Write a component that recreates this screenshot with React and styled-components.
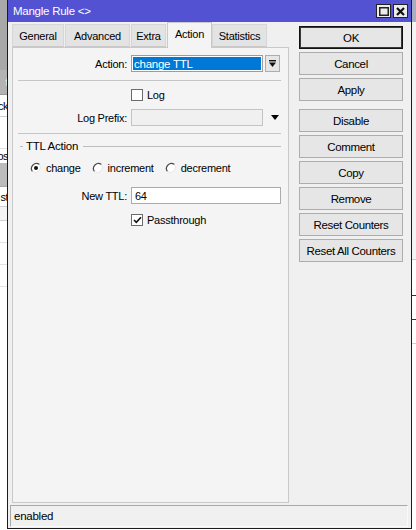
import React from 'react';
import styled, { createGlobalStyle } from 'styled-components';

const Global = createGlobalStyle`
  html, body { margin: 0; padding: 0; }
  body {
    width: 416px;
    height: 530px;
    overflow: hidden;
    background: #fff;
    font-family: "Liberation Sans", Arial, sans-serif;
    font-size: 11px;
    letter-spacing: -0.25px;
    color: #000;
  }
  * { box-sizing: border-box; }
`;

/* ---------- desktop behind the dialog ---------- */

const Desktop = styled.div`
  position: relative;
  width: 416px;
  height: 530px;
  overflow: hidden;
  display: flex;
  justify-content: space-between;
  background: #fff;
`;

const Pane = styled.div`
  width: ${(p) => p.$w}px;
  display: flex;
  flex-direction: column;
`;

const PaneRow = styled.div`
  flex: none;
  height: ${(p) => p.$h}px;
  background: ${(p) => p.$bg || '#fff'};
  border-bottom: ${(p) => (p.$line ? `1px solid ${p.$line}` : 'none')};
  color: ${(p) => p.$color || '#000'};
  display: flex;
  justify-content: flex-end;
  align-items: center;
  white-space: nowrap;
  font-size: 11px;
  letter-spacing: -0.5px;
`;

/* ---------- dialog window ---------- */

const Window = styled.div`
  position: absolute;
  left: 7px;
  top: 0;
  width: 405px;
  height: 529px;
  border: 1px solid #1c1c1c;
  border-top: none;
  background: #f0f0f0;
  display: flex;
  flex-direction: column;
`;

const TitleBar = styled.div`
  flex: none;
  height: 22px;
  background: #5252d2;
  display: flex;
  align-items: center;
  padding: 0 3px 0 5px;
  color: #fff;
  font-size: 11.5px;
`;

const Title = styled.div`
  flex: 1;
`;

const TitleButton = styled.div`
  width: 15px;
  height: 14px;
  margin-left: 2px;
  background: #ececec;
  border: 1px solid #222;
  display: flex;
  align-items: center;
  justify-content: center;
`;

const Body = styled.div`
  flex: 1;
  min-height: 0;
  display: flex;
  padding: 2px 0 0 4px;
`;

const Main = styled.div`
  width: 277px;
  display: flex;
  flex-direction: column;
`;

const TabRow = styled.div`
  flex: none;
  height: 23px;
  display: flex;
  align-items: flex-end;
  position: relative;
  z-index: 1;
`;

const Tab = styled.div`
  width: ${(p) => p.$w}px;
  height: ${(p) => (p.$active ? 26 : 23)}px;
  margin-right: ${(p) => p.$gap ?? 1}px;
  margin-bottom: ${(p) => (p.$active ? -1 : 0)}px;
  background: ${(p) => (p.$active ? '#f4f4f4' : '#e3e3e3')};
  border: 1px solid ${(p) => (p.$active ? '#c9c9c9' : '#d6d6d6')};
  border-bottom: ${(p) => (p.$active ? 'none' : '1px solid #c9c9c9')};
  display: flex;
  align-items: center;
  justify-content: center;
  padding-bottom: ${(p) => (p.$active ? 3 : 0)}px;
`;

const Panel = styled.div`
  flex: 1;
  background: #f4f4f4;
  border: 1px solid #c9c9c9;
  padding: 7px 7px 0 0;
  display: flex;
  flex-direction: column;
`;

const FormRow = styled.div`
  flex: none;
  display: grid;
  grid-template-columns: 114px 1fr;
  column-gap: 4px;
  align-items: center;
  height: ${(p) => p.$h || 17}px;
  margin-top: ${(p) => p.$mt || 0}px;
`;

const Label = styled.div`
  text-align: right;
  white-space: nowrap;
`;

const FieldLine = styled.div`
  display: flex;
  align-items: center;
  height: 100%;
`;

const SelectBox = styled.div`
  width: 132px;
  height: 17px;
  border: 1px solid #9c9c9c;
  background: #fff;
  padding: 1px;
  display: flex;
`;

const SelectText = styled.div`
  flex: 1;
  background: #0078d7;
  color: #fff;
  padding-left: 1px;
  display: flex;
  align-items: center;
  font-size: 11.5px;
`;

const MoreButton = styled.div`
  width: 15px;
  height: 17px;
  margin-left: 2px;
  background: #e6e6e6;
  border: 1px solid #adadad;
  display: flex;
  align-items: center;
  justify-content: center;
`;

const Input = styled.div`
  width: ${(p) => p.$w}px;
  height: 17px;
  border: 1px solid ${(p) => (p.$disabled ? '#c4c4c4' : '#acacac')};
  background: ${(p) => (p.$disabled ? '#f0f0f0' : '#fff')};
  padding-left: 3px;
  display: flex;
  align-items: center;
`;

const DropArrow = styled.div`
  margin-left: 8px;
  width: 0;
  height: 0;
  border-left: 4.5px solid transparent;
  border-right: 4.5px solid transparent;
  border-top: 5px solid #000;
`;

const Separator = styled.div`
  flex: none;
  height: 1px;
  background: #c6c6c6;
  margin: ${(p) => p.$mt}px 0 0 5px;
`;

const Check = styled.div`
  width: 12px;
  height: 12px;
  border: 1px solid #6b6b6b;
  background: #fff;
  display: flex;
  align-items: center;
  justify-content: center;
`;

const CheckText = styled.span`
  margin-left: 4px;
`;

const GroupHeader = styled.div`
  flex: none;
  height: 12px;
  margin-top: 6px;
  padding-left: 7px;
  display: flex;
  align-items: center;
  gap: 3px;
  font-size: 11.5px;
`;

const GroupDash = styled.div`
  width: ${(p) => p.$w || 4}px;
  flex: ${(p) => (p.$grow ? 1 : 'none')};
  height: 1px;
  background: #bdbdbd;
  margin-left: ${(p) => (p.$grow ? 2 : 0)}px;
`;

const RadioRow = styled.div`
  flex: none;
  height: 13px;
  margin-top: 9px;
  padding-left: 17px;
  display: flex;
  align-items: center;
  gap: 11px;
`;

const RadioItem = styled.div`
  display: flex;
  align-items: center;
  gap: 4px;
`;

const Side = styled.div`
  width: 104px;
  margin-left: 10px;
  padding-top: 2px;
  display: flex;
  flex-direction: column;
  gap: 3px;
`;

const Button = styled.div`
  height: 23px;
  flex: none;
  margin-top: ${(p) => p.$mt || 0}px;
  background: #e6e6e6;
  border: 1px solid ${(p) => (p.$default ? '#111' : '#adadad')};
  box-shadow: ${(p) => (p.$default ? 'inset 0 0 0 1px #3a3a3a' : 'none')};
  display: flex;
  align-items: center;
  justify-content: center;
  font-size: 11.5px;
  letter-spacing: -0.35px;
`;

const StatusBar = styled.div`
  flex: none;
  height: 22px;
  margin: 2px 3px 1px 2px;
  border: 1px solid;
  border-color: #a9a9a9 #fafafa #fafafa #a9a9a9;
  padding-left: 3px;
  display: flex;
  align-items: center;
  font-size: 11.5px;
`;

/* ---------- drawings ---------- */

const CheckMark = () => (
  <svg width="9" height="8" viewBox="0 0 9 8">
    <path d="M1 4 L3.3 6.4 L8 1.2" fill="none" stroke="#111" strokeWidth="1.6" />
  </svg>
);

const Radio = ({ checked }) => (
  <svg width="12" height="12" viewBox="0 0 12 12">
    <circle cx="6" cy="6" r="5" fill="#fff" />
    <path d="M9.5 2.5 A5 5 0 0 0 2.5 9.5" fill="none" stroke="#4a4a4a" strokeWidth="1.2" />
    <path d="M9.5 2.5 A5 5 0 0 1 2.5 9.5" fill="none" stroke="#e4e4e4" strokeWidth="1" />
    {checked && <circle cx="6" cy="6" r="2" fill="#111" />}
  </svg>
);

const MoreIcon = () => (
  <svg width="9" height="9" viewBox="0 0 9 9">
    <rect x="1" y="1" width="7" height="1.4" fill="#111" />
    <path d="M1 3.5 H8 L4.5 8 Z" fill="#111" />
  </svg>
);

const MaxIcon = () => (
  <svg width="10" height="9" viewBox="0 0 10 9">
    <rect x="0.75" y="0.75" width="8.5" height="7.5" fill="none" stroke="#222" strokeWidth="1.5" />
  </svg>
);

const CloseIcon = () => (
  <svg width="9" height="9" viewBox="0 0 9 9">
    <path d="M1 1 L8 8 M8 1 L1 8" stroke="#111" strokeWidth="2.2" />
  </svg>
);

/* ---------- data ---------- */

const leftRows = [
  { h: 70, bg: '#a9a9a9' },
  { h: 25, bg: '#b3b3b3', text: 't', color: '#f4f4f4', line: '#999' },
  { h: 22, text: 'ck', line: '#cfcfcf' },
  { h: 32, line: '#e2e2e2' },
  { h: 14, text: 'os' },
  { h: 24, bg: '#bcbcbc', line: '#a8a8a8' },
  { h: 20, text: 'st', line: '#cfcfcf' },
  { h: 14, bg: '#f4f4f4', line: '#cfcfcf' },
  { h: 22, line: '#e2e2e2' },
  { h: 22, line: '#e2e2e2' },
  { h: 22, line: '#e2e2e2' },
  { h: 240 },
];

const rightRows = [
  { h: 22, bg: '#a8aec0' },
  { h: 238, bg: '#f4f4f4', line: '#c9c9c9' },
  { h: 36, line: '#333' },
  { h: 24, line: '#333' },
  { h: 24, line: '#d0d0d0' },
  { h: 200 },
];

const tabs = [
  { name: 'General', w: 52 },
  { name: 'Advanced', w: 65 },
  { name: 'Extra', w: 35, gap: 1 },
  { name: 'Action', w: 45, active: true, gap: 0 },
  { name: 'Statistics', w: 55 },
];

const buttons = [
  { label: 'OK', isDefault: true },
  { label: 'Cancel' },
  { label: 'Apply' },
  { label: 'Disable', mt: 5 },
  { label: 'Comment' },
  { label: 'Copy' },
  { label: 'Remove' },
  { label: 'Reset Counters' },
  { label: 'Reset All Counters' },
];

export default function App() {
  return (
    <>
      <Global />
      <Desktop>
        <Pane $w={8}>
          {leftRows.map((r, i) => (
            <PaneRow key={i} $h={r.h} $bg={r.bg} $line={r.line} $color={r.color}>
              {r.text}
            </PaneRow>
          ))}
        </Pane>
        <Pane $w={5}>
          {rightRows.map((r, i) => (
            <PaneRow key={i} $h={r.h} $bg={r.bg} $line={r.line} />
          ))}
        </Pane>

        <Window>
          <TitleBar>
            <Title>Mangle Rule &lt;&gt;</Title>
            <TitleButton>
              <MaxIcon />
            </TitleButton>
            <TitleButton>
              <CloseIcon />
            </TitleButton>
          </TitleBar>

          <Body>
            <Main>
              <TabRow>
                {tabs.map((t) => (
                  <Tab key={t.name} $w={t.w} $active={t.active} $gap={t.gap}>
                    {t.name}
                  </Tab>
                ))}
              </TabRow>
              <Panel>
                <FormRow>
                  <Label>Action:</Label>
                  <FieldLine>
                    <SelectBox>
                      <SelectText>change TTL</SelectText>
                    </SelectBox>
                    <MoreButton>
                      <MoreIcon />
                    </MoreButton>
                  </FieldLine>
                </FormRow>

                <Separator $mt={8} />

                <FormRow $h={13} $mt={7}>
                  <span />
                  <FieldLine>
                    <Check />
                    <CheckText>Log</CheckText>
                  </FieldLine>
                </FormRow>

                <FormRow $mt={8}>
                  <Label>Log Prefix:</Label>
                  <FieldLine>
                    <Input $w={132} $disabled />
                    <DropArrow />
                  </FieldLine>
                </FormRow>

                <Separator $mt={7} />

                <GroupHeader>
                  <GroupDash $w={3} />
                  <span>TTL Action</span>
                  <GroupDash $grow />
                </GroupHeader>

                <RadioRow>
                  <RadioItem>
                    <Radio checked />
                    <span>change</span>
                  </RadioItem>
                  <RadioItem>
                    <Radio />
                    <span>increment</span>
                  </RadioItem>
                  <RadioItem>
                    <Radio />
                    <span>decrement</span>
                  </RadioItem>
                </RadioRow>

                <FormRow $mt={13}>
                  <Label>New TTL:</Label>
                  <FieldLine>
                    <Input $w={150}>64</Input>
                  </FieldLine>
                </FormRow>

                <FormRow $h={13} $mt={9}>
                  <span />
                  <FieldLine>
                    <Check>
                      <CheckMark />
                    </Check>
                    <CheckText>Passthrough</CheckText>
                  </FieldLine>
                </FormRow>
              </Panel>
            </Main>

            <Side>
              {buttons.map((b) => (
                <Button key={b.label} $default={b.isDefault} $mt={b.mt}>
                  {b.label}
                </Button>
              ))}
            </Side>
          </Body>

          <StatusBar>enabled</StatusBar>
        </Window>
      </Desktop>
    </>
  );
}
